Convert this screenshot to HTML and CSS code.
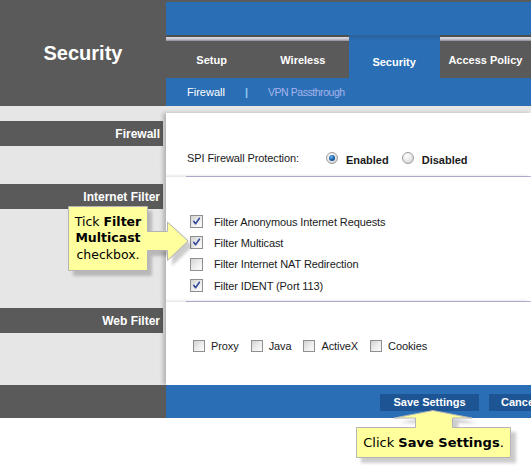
FILE: index.html
```html
<!DOCTYPE html>
<html>
<head>
<meta charset="utf-8">
<title>Security</title>
<link rel="stylesheet" href="styles.css">
</head>
<body>
<div class="page">
  <header class="top">
    <div class="brand">Security</div>
    <nav class="nav">
      <div class="band"></div>
      <div class="tabs">
        <div class="tab">Setup</div>
        <div class="tab">Wireless</div>
        <div class="tab active">Security</div>
        <div class="tab">Access Policy</div>
      </div>
      <div class="subnav">
        <span class="sub-cur">Firewall</span>
        <span class="sub-sep">|</span>
        <span class="sub-link">VPN Passthrough</span>
      </div>
    </nav>
  </header>

  <main class="main">
    <div class="label label-1">Firewall</div>
    <section class="sec">
      <div class="fw">
        <span class="txt spi">SPI Firewall Protection:</span>
        <span class="radio on"></span><span class="rlabel">Enabled</span>
        <span class="radio off"></span><span class="rlabel">Disabled</span>
      </div>
    </section>

    <div class="label label-2">Internet Filter</div>
    <section class="sec">
      <div class="inf">
        <div class="row"><span class="cb on"><svg viewBox="0 0 13 13"><path d="M3.2 6.2 L5.4 9.2 L10 2.6"/></svg></span><span class="txt">Filter Anonymous Internet Requests</span></div>
        <div class="row"><span class="cb on"><svg viewBox="0 0 13 13"><path d="M3.2 6.2 L5.4 9.2 L10 2.6"/></svg></span><span class="txt">Filter Multicast</span></div>
        <div class="row"><span class="cb"></span><span class="txt">Filter Internet NAT Redirection</span></div>
        <div class="row"><span class="cb on"><svg viewBox="0 0 13 13"><path d="M3.2 6.2 L5.4 9.2 L10 2.6"/></svg></span><span class="txt">Filter IDENT (Port 113)</span></div>
      </div>
    </section>

    <div class="label label-3">Web Filter</div>
    <section class="sec">
      <div class="wf">
        <span class="item"><span class="cb small"></span><span class="txt">Proxy</span></span>
        <span class="item"><span class="cb small"></span><span class="txt">Java</span></span>
        <span class="item"><span class="cb small"></span><span class="txt">ActiveX</span></span>
        <span class="item"><span class="cb small"></span><span class="txt">Cookies</span></span>
      </div>
    </section>
  </main>

  <footer class="foot">
    <div class="foot-left"></div>
    <div class="foot-right">
      <button class="btn save">Save Settings</button>
      <button class="btn">Cancel Changes</button>
    </div>
  </footer>

  <div class="callout callout-left">
    <svg class="bubble" width="140" height="80" viewBox="0 0 140 80">
      <defs><filter id="blur1" x="-20%" y="-20%" width="140%" height="140%"><feGaussianBlur stdDeviation="1.5"/></filter></defs>
      <polygon class="shadow" filter="url(#blur1)" transform="translate(5 5)" points="6,6 85,6 85,31 105,31 105,22 126,41 105,61 105,51 85,51 85,71 6,71"/>
      <polygon class="shape" points="6.5,6.5 85.5,6.5 85.5,31.5 105.5,31.5 105.5,22 126,41 105.5,60.5 105.5,50.5 85.5,50.5 85.5,70.5 6.5,70.5"/>
    </svg>
    <div class="ctext ctext-left"><span class="cinner">Tick <b>Filter</b><br><b>Multicast</b><br>checkbox.</span></div>
  </div>

  <div class="callout callout-bottom">
    <svg class="bubble" width="181" height="63" viewBox="0 0 181 63">
      <defs><filter id="blur2" x="-20%" y="-20%" width="140%" height="140%"><feGaussianBlur stdDeviation="1.5"/></filter></defs>
      <polygon class="shadow" filter="url(#blur2)" transform="translate(5 5)" points="6,23 65,23 65,14 44,14 83,6 123,14 103,14 103,23 161,23 161,54 6,54"/>
      <polygon class="shape" points="6.5,23.5 65.5,23.5 65.5,14 44,14 83,6.5 122,14 102.5,14 102.5,23.5 160.5,23.5 160.5,53.5 6.5,53.5"/>
    </svg>
    <div class="ctext ctext-bottom"><span class="cinner">Click <b>Save Settings</b>.</span></div>
  </div>
</div>
</body>
</html>
```

FILE: styles.css
```css
* { box-sizing: border-box; margin: 0; padding: 0; }

body {
  width: 531px;
  height: 467px;
  overflow: hidden;
  background: #ffffff;
  font-family: "Liberation Sans", Arial, sans-serif;
}

.page {
  position: relative;
  width: 531px;
  height: 467px;
  overflow: hidden;
}

/* ---------- header ---------- */
.top {
  display: grid;
  grid-template-columns: 166px 1fr;
  height: 106px;
  background: #5a5a5a;
}

.brand {
  display: flex;
  align-items: center;
  justify-content: center;
  color: #ffffff;
  font-weight: bold;
  font-size: 20px;
  padding-top: 1px;
}

.nav {
  display: flex;
  flex-direction: column;
  padding-top: 2px;
}

.band {
  height: 33px;
  background: #2a6fb6;
}

.tabs {
  display: flex;
  height: 43px;
}

.tab {
  flex: 1;
  display: flex;
  align-items: center;
  justify-content: center;
  padding-top: 6px;
  color: #ffffff;
  font-weight: bold;
  font-size: 11px;
  background: linear-gradient(#4e4e4e 0, #4e4e4e 2px, #dedee6 2px, #c6c6d0 4px, #8c8c98 6px, #5a5a5a 6px);
}

.tab.active {
  padding-top: 10px;
  background: linear-gradient(#2b5f98 0, #2a6fb6 6px);
}

.subnav {
  height: 28px;
  display: flex;
  align-items: center;
  padding-left: 21px;
  background: #2a6fb6;
  font-size: 11px;
}

.sub-cur { color: #ffffff; }

.sub-sep {
  color: #8ccaf2;
  font-weight: bold;
  margin: 0 20px 0 20px;
}

.sub-link {
  color: #a7b4ec;
  font-size: 10.5px;
  letter-spacing: -0.45px;
}

/* ---------- body ---------- */
.main {
  display: grid;
  grid-template-columns: 166px 1fr;
  grid-template-rows: 64px 125px 83px;
  padding-top: 7px;
  background: #e6e6e6;
}

.label {
  height: 25px;
  margin-right: 3px;
  background: #5a5a5a;
  color: #ffffff;
  font-weight: bold;
  font-size: 12px;
  display: flex;
  align-items: center;
  justify-content: flex-end;
  padding-right: 3px;
}

.label-1 { margin-top: 8px; }
.label-2 { margin-top: 7px; }
.label-3 { margin-top: 6px; }

.sec {
  background: #ffffff;
  padding-left: 20px;
  box-shadow: -3px 0 4px rgba(0, 0, 0, 0.22);
  overflow: hidden;
}

.txt {
  font-size: 11px;
  letter-spacing: -0.1px;
  color: #1a1a1a;
  white-space: nowrap;
}

.fw {
  height: 64px;
  border-bottom: 1px solid #b9b9de;
  padding-top: 37px;
  display: flex;
  align-items: flex-start;
}

.fw > * { height: 16px; display: flex; align-items: center; }

.spi { margin-left: 1px; }

.radio {
  flex: none;
  width: 12px;
  height: 12px !important;
  margin-top: 2px;
  border-radius: 50%;
  border: 1px solid #9c9c9c;
  background: radial-gradient(circle at 35% 30%, #ffffff 0, #e6e6e6 55%, #c8c8c8 100%);
  position: relative;
}

.radio.on { margin-left: 27px; }
.radio.off { margin-left: 13px; }

.radio.on::after {
  content: "";
  position: absolute;
  left: 2px;
  top: 2px;
  width: 6px;
  height: 6px;
  border-radius: 50%;
  background: radial-gradient(circle at 40% 35%, #7fc0f0 0, #1f66b0 45%, #0c2f66 100%);
}

.rlabel {
  margin-left: 8px;
  font-size: 11px;
  font-weight: bold;
  color: #1a1a1a;
  padding-top: 3px;
}

.inf {
  height: 125px;
  border-bottom: 1px solid #b9b9de;
  padding-top: 34px;
}

.row {
  height: 21.3px;
  display: flex;
  align-items: center;
}

.cb {
  flex: none;
  width: 13px;
  height: 13px;
  border: 1px solid #8f8f8f;
  background: linear-gradient(135deg, #d2d2d2 0, #eeeeee 55%, #fbfbfb 100%);
  display: flex;
  align-items: center;
  justify-content: center;
}

.row .cb { margin-left: 4px; margin-right: 11px; }

.cb svg {
  width: 11px;
  height: 11px;
}

.cb svg path {
  fill: none;
  stroke: #34479a;
  stroke-width: 1.8;
  stroke-linecap: round;
  stroke-linejoin: round;
}

.wf {
  padding-top: 36px;
  padding-left: 7px;
  display: flex;
  gap: 12px;
}

.item {
  display: flex;
  align-items: center;
  height: 16px;
  gap: 6px;
}

.cb.small {
  width: 12px;
  height: 12px;
}

/* ---------- footer ---------- */
.foot {
  display: grid;
  grid-template-columns: 166px 1fr;
  height: 33px;
}

.foot-left { background: #5a5a5a; }

.foot-right {
  background: #2a6fb6;
  display: flex;
  align-items: flex-start;
  gap: 10px;
  padding: 9px 0 0 214px;
  overflow: hidden;
}

.btn {
  flex: none;
  height: 17px;
  border: 0;
  background: #1d5594;
  color: #ffffff;
  font-family: "Liberation Sans", Arial, sans-serif;
  font-weight: bold;
  font-size: 11px;
  padding: 0 12px;
  line-height: 17px;
}

.btn.save {
  width: 99px;
  padding: 0;
}

/* ---------- callouts ---------- */
.callout { position: absolute; }

.callout-left { left: 62px; top: 200px; width: 140px; height: 80px; }
.callout-bottom { left: 350px; top: 404px; width: 181px; height: 63px; }

.bubble {
  position: absolute;
  left: 0;
  top: 0;
  overflow: visible;
}

.bubble .shadow { fill: rgba(0, 0, 0, 0.2); }

.bubble .shape {
  fill: #ffff9e;
  stroke: #b4b4b4;
  stroke-width: 1;
}

.ctext {
  position: absolute;
  font-family: "DejaVu Sans", Verdana, sans-serif;
  color: #000000;
  text-align: center;
  display: flex;
  align-items: center;
  justify-content: center;
}

.cinner { display: block; }

.ctext b { font-weight: bold; }

.ctext-left {
  left: 6px;
  top: 6px;
  width: 80px;
  height: 65px;
  font-size: 12.5px;
  line-height: 16.5px;
}

.ctext-bottom {
  left: 6px;
  top: 23px;
  width: 155px;
  height: 31px;
  font-size: 13px;
  white-space: nowrap;
}
```
